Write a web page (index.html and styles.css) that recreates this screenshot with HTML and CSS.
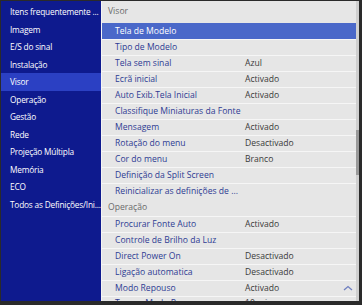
FILE: index.html
```html
<!DOCTYPE html>
<html lang="pt">
<head>
    <meta charset="UTF-8">
    <meta name="viewport" content="width=device-width, initial-scale=1.0">
    <title>Menu</title>
    <link rel="stylesheet" href="styles.css">
</head>
<body>
    <div class="frame">
        <ul class="side">
            <li>Itens frequentemente ...</li>
            <li>Imagem</li>
            <li>E/S do sinal</li>
            <li>Instalação</li>
            <li class="on">Visor</li>
            <li>Operação</li>
            <li>Gestão</li>
            <li>Rede</li>
            <li>Projeção Múltipla</li>
            <li>Memória</li>
            <li>ECO</li>
            <li>Todos as Definições/Ini...</li>
        </ul>

        <div class="main">
            <div class="list">
                <div class="head first">Visor</div>
                <div class="row sel"><span>Tela de Modelo</span><span></span></div>
                <div class="row"><span>Tipo de Modelo</span><span></span></div>
                <div class="row"><span>Tela sem sinal</span><span>Azul</span></div>
                <div class="row"><span>Ecrã inicial</span><span>Activado</span></div>
                <div class="row"><span>Auto Exib.Tela Inicial</span><span>Activado</span></div>
                <div class="row"><span>Classifique Miniaturas da Fonte</span><span></span></div>
                <div class="row"><span>Mensagem</span><span>Activado</span></div>
                <div class="row"><span>Rotação do menu</span><span>Desactivado</span></div>
                <div class="row"><span>Cor do menu</span><span>Branco</span></div>
                <div class="row"><span>Definição da Split Screen</span><span></span></div>
                <div class="row"><span>Reinicializar as definições de ...</span><span></span></div>

                <div class="head">Operação</div>
                <div class="row"><span>Procurar Fonte Auto</span><span>Activado</span></div>
                <div class="row"><span>Controle de Brilho da Luz</span><span></span></div>
                <div class="row"><span>Direct Power On</span><span>Desactivado</span></div>
                <div class="row"><span>Ligação automatica</span><span>Desactivado</span></div>
                <div class="row"><span>Modo Repouso</span><span>Activado</span></div>
                <div class="row cut"><span>Tempo Modo Repouso</span><span>10 min</span></div>
            </div>
            <div class="bar"><div class="thumb"></div></div>

            <svg class="up" width="10" height="6" viewBox="0 0 10 6">
                <path d="M1 5 L5 1.5 L9 5" fill="none" stroke="#6f7fc0" stroke-width="1.3"/>
            </svg>
        </div>
    </div>
</body>
</html>
```

FILE: styles.css
```css
body{
    margin: 0;
    font-family: "Open Sans", sans-serif;
    font-size: 8.6px;
    background-color: #fff;
}
.frame {
    width: 362px;
    height: 305px;
    box-sizing: border-box;
    border: 1px solid #2a2a2a;
    border-bottom-width: 4px;
    border-right-width: 3px;
    display: grid;
    grid-template-columns: 100px 1fr;
    overflow: hidden;
    background-color: #0e1a8e;
}
.side{
    list-style: none;
    margin: 0;
    padding: 2px 0 0 0;
    color: #fff;
    font-size: 8.3px;
    letter-spacing: -0.2px;
}
.side li{
    height: 17.5px;
    line-height: 17.5px;
    padding-left: 9px;
    white-space: nowrap;
}
.side li.on{
    background-color: #2b40c3;
}
.main{
    position: relative;
    display: flex;
    background-color: #e6e6e6;
    border-left: 1px solid #f4f4f4;
    overflow: hidden;
}
.list{
    flex: 1;
}
.head{
    height: 17px;
    line-height: 17px;
    padding-left: 6px;
    color: #6a6a6a;
}
.head.first{
    height: 22px;
    line-height: 21px;
}
.row{
    display: grid;
    grid-template-columns: 130px 1fr;
    height: 15px;
    line-height: 15px;
    padding-left: 13px;
    border-top: 1px solid #f6f6f6;
    color: #2d3b93;
    white-space: nowrap;
}
.row span:last-child{
    color: #3a3a3a;
}
.row.sel{
    background-color: #4a68c9;
    color: #fff;
    border-top-color: #4a68c9;
}
.row.cut{
    line-height: 13px;
}
.bar{
    width: 3px;
    background-color: #cfcfcf;
    position: relative;
}
.thumb{
    position: absolute;
    left: 0;
    top: 129px;
    width: 3px;
    height: 45px;
    background-color: #9a9a9a;
}
.up{
    position: absolute;
    right: 6px;
    bottom: 10px;
}
```
